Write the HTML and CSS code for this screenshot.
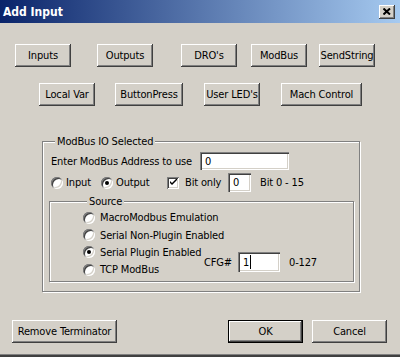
FILE: index.html
```html
<!DOCTYPE html>
<html lang="en">
<head>
  <meta charset="UTF-8" />
  <title>Add Input</title>
  <link rel="stylesheet" href="styles.css">
</head>
<body>
  <div class="dialog">
    <div class="titlebar">
      <span class="title">Add Input</span>
      <div class="close">
        <svg width="8" height="7" viewBox="0 0 8 7">
          <path d="M0.5 0.5 L7 6.5 M7 0.5 L0.5 6.5" stroke="#000" stroke-width="2" fill="none"/>
        </svg>
      </div>
    </div>

    <div class="content">
      <div class="btn-row row1">
        <div class="btn b-inputs">Inputs</div>
        <div class="btn b-outputs">Outputs</div>
        <div class="btn b-dros">DRO's</div>
        <div class="btn b-modbus">ModBus</div>
        <div class="btn b-send">SendString</div>
      </div>
      <div class="btn-row row2">
        <div class="btn b-local">Local Var</div>
        <div class="btn b-press">ButtonPress</div>
        <div class="btn b-leds">User LED's</div>
        <div class="btn b-mach">Mach Control</div>
      </div>

      <fieldset class="group modbus">
        <legend>ModBus IO Selected</legend>
        <div class="addr-row">
          <span class="addr-label">Enter ModBus Address to use</span>
          <div class="field addr">0</div>
        </div>
        <div class="io-row">
          <span class="radio"></span><span class="opt-input">Input</span>
          <span class="radio on"></span><span class="opt-output">Output</span>
          <span class="check">
            <svg width="7" height="7" viewBox="0 0 7 7">
              <path d="M0 2 L0 4 L2 6 L7 1 L7 -1 L2 4 Z" fill="#000"/>
            </svg>
          </span>
          <span class="opt-bit">Bit only</span>
          <div class="field bit">0</div>
          <span>Bit 0 - 15</span>
        </div>

        <fieldset class="group source">
          <legend>Source</legend>
          <div class="source-body">
            <div class="radios">
              <div class="src-row"><span class="radio"></span>MacroModbus Emulation</div>
              <div class="src-row"><span class="radio"></span>Serial Non-Plugin Enabled</div>
              <div class="src-row"><span class="radio on"></span>Serial Plugin Enabled</div>
              <div class="src-row"><span class="radio"></span>TCP ModBus</div>
            </div>
            <div class="cfg">
              <span class="cfg-label">CFG#</span>
              <div class="field cfg-box">1<span class="caret"></span></div>
              <span>0-127</span>
            </div>
          </div>
        </fieldset>
      </fieldset>

      <div class="footer">
        <div class="btn b-remove">Remove Terminator</div>
        <div class="btn default b-ok">OK</div>
        <div class="btn b-cancel">Cancel</div>
      </div>
    </div>
  </div>
</body>
</html>
```

FILE: styles.css
```css
:root {
  --face: #d4d0c8;
  --shadow: #808080;
  --dark: #404040;
}

body {
  margin: 0;
  background: var(--face);
  font-family: "DejaVu Sans Condensed", "DejaVu Sans", sans-serif;
  font-size: 11px;
  letter-spacing: -0.15px;
  color: #000;
  overflow: hidden;
}

.dialog {
  width: 400px;
  height: 357px;
  box-sizing: border-box;
  border-bottom: 2px solid var(--dark);
  box-shadow: inset 0 -1px 0 var(--shadow);
  display: flex;
  flex-direction: column;
}

.titlebar {
  height: 23px;
  flex-shrink: 0;
  background: linear-gradient(to right, #0a246a, #a6caf0);
  display: flex;
  align-items: center;
  justify-content: space-between;
  padding: 0 5px 0 3px;
}

.title {
  color: #fff;
  font-weight: bold;
  font-size: 12px;
  letter-spacing: 0;
}

.close {
  width: 16px;
  height: 14px;
  background: var(--face);
  box-shadow: inset -1px -1px var(--dark), inset 1px 1px #fff, inset -2px -2px var(--shadow);
  display: flex;
  align-items: center;
  justify-content: center;
}

.content {
  flex: 1;
  display: flex;
  flex-direction: column;
}

.btn {
  height: 23px;
  box-sizing: border-box;
  background: var(--face);
  box-shadow: inset -1px -1px var(--dark), inset 1px 1px #fff, inset -2px -2px var(--shadow);
  display: flex;
  align-items: center;
  justify-content: center;
  width: 56px;
  flex-shrink: 0;
  white-space: nowrap;
}

.btn.default {
  border: 1px solid #000;
}

.btn-row {
  display: flex;
}

.row1 {
  margin-top: 21px;
}

.row2 {
  margin-top: 16px;
}

.b-inputs { margin-left: 15px; }
.b-outputs { margin-left: 26px; }
.b-dros { margin-left: 28px; }
.b-modbus { margin-left: 14px; }
.b-send { margin-left: 12px; }

.b-local { margin-left: 39px; }
.b-press { margin-left: 20px; width: 68px; }
.b-leds { margin-left: 21px; }
.b-mach { margin-left: 21px; width: 81px; }

.group {
  margin: 0;
  border: 1px solid var(--shadow);
  box-shadow: 1px 1px 0 #fff, inset 1px 1px 0 #fff;
  min-width: 0;
}

.group legend {
  padding: 0 2px;
  margin-left: 4px;
  background: var(--face);
  line-height: 13px;
}

.modbus {
  margin: 29px 0 0 42px;
  width: 318px;
  height: 157px;
  box-sizing: border-box;
  padding: 4px 7px 0 8px;
}

.addr-row {
  display: flex;
  align-items: center;
  height: 18px;
}

.addr-label {
  width: 149px;
  white-space: nowrap;
}

.addr {
  width: 89px;
}

.field {
  height: 18px;
  box-sizing: border-box;
  background: #fff;
  box-shadow: inset 1px 1px var(--shadow), inset 2px 2px var(--dark), inset -1px -1px #fff, inset -2px -2px var(--face);
  padding-left: 5px;
  display: flex;
  align-items: center;
}

.io-row {
  display: flex;
  align-items: center;
  height: 19px;
  margin-top: 3px;
}

.radio {
  width: 12px;
  height: 12px;
  border-radius: 50%;
  background: #fff;
  box-shadow: inset 1px 1px var(--shadow), inset -1px -1px #fff, inset 2px 2px var(--dark), inset -2px -2px var(--face);
  display: inline-flex;
  align-items: center;
  justify-content: center;
  flex-shrink: 0;
}

.radio.on::after {
  content: "";
  width: 4px;
  height: 4px;
  border-radius: 50%;
  background: #000;
}

.opt-input { margin-left: 3px; width: 35px; }
.opt-output { margin-left: 3px; width: 51px; }
.opt-bit { margin-left: 6px; width: 43px; }

.check {
  width: 12px;
  height: 12px;
  box-sizing: border-box;
  background: #fff;
  box-shadow: inset 1px 1px var(--shadow), inset -1px -1px #fff, inset 2px 2px var(--dark), inset -2px -2px var(--face);
  display: flex;
  align-items: center;
  justify-content: center;
}

.bit {
  width: 23px;
  height: 19px;
  margin-right: 9px;
}

.source {
  margin: 3px 0 0 -2px;
  width: 305px;
  height: 87px;
  box-sizing: border-box;
  padding: 1px 0 0 33px;
}

.source-body {
  display: flex;
}

.radios {
  display: flex;
  flex-direction: column;
  width: 117px;
  white-space: nowrap;
}

.src-row {
  height: 17.4px;
  display: flex;
  align-items: center;
  gap: 5px;
}

.cfg {
  display: flex;
  align-items: center;
  align-self: flex-start;
  margin-top: 43px;
  margin-left: 4px;
  height: 20px;
}

.cfg-label {
  width: 34px;
}

.cfg-box {
  width: 42px;
  height: 20px;
  margin-right: 9px;
}

.caret {
  width: 1px;
  height: 14px;
  background: #000;
  margin-left: 1px;
}

.footer {
  display: flex;
  margin-top: 28px;
}

.b-remove { margin-left: 12px; width: 105px; }
.b-ok { margin-left: 111px; width: 75px; }
.b-cancel { margin-left: 9px; width: 75px; }
```
